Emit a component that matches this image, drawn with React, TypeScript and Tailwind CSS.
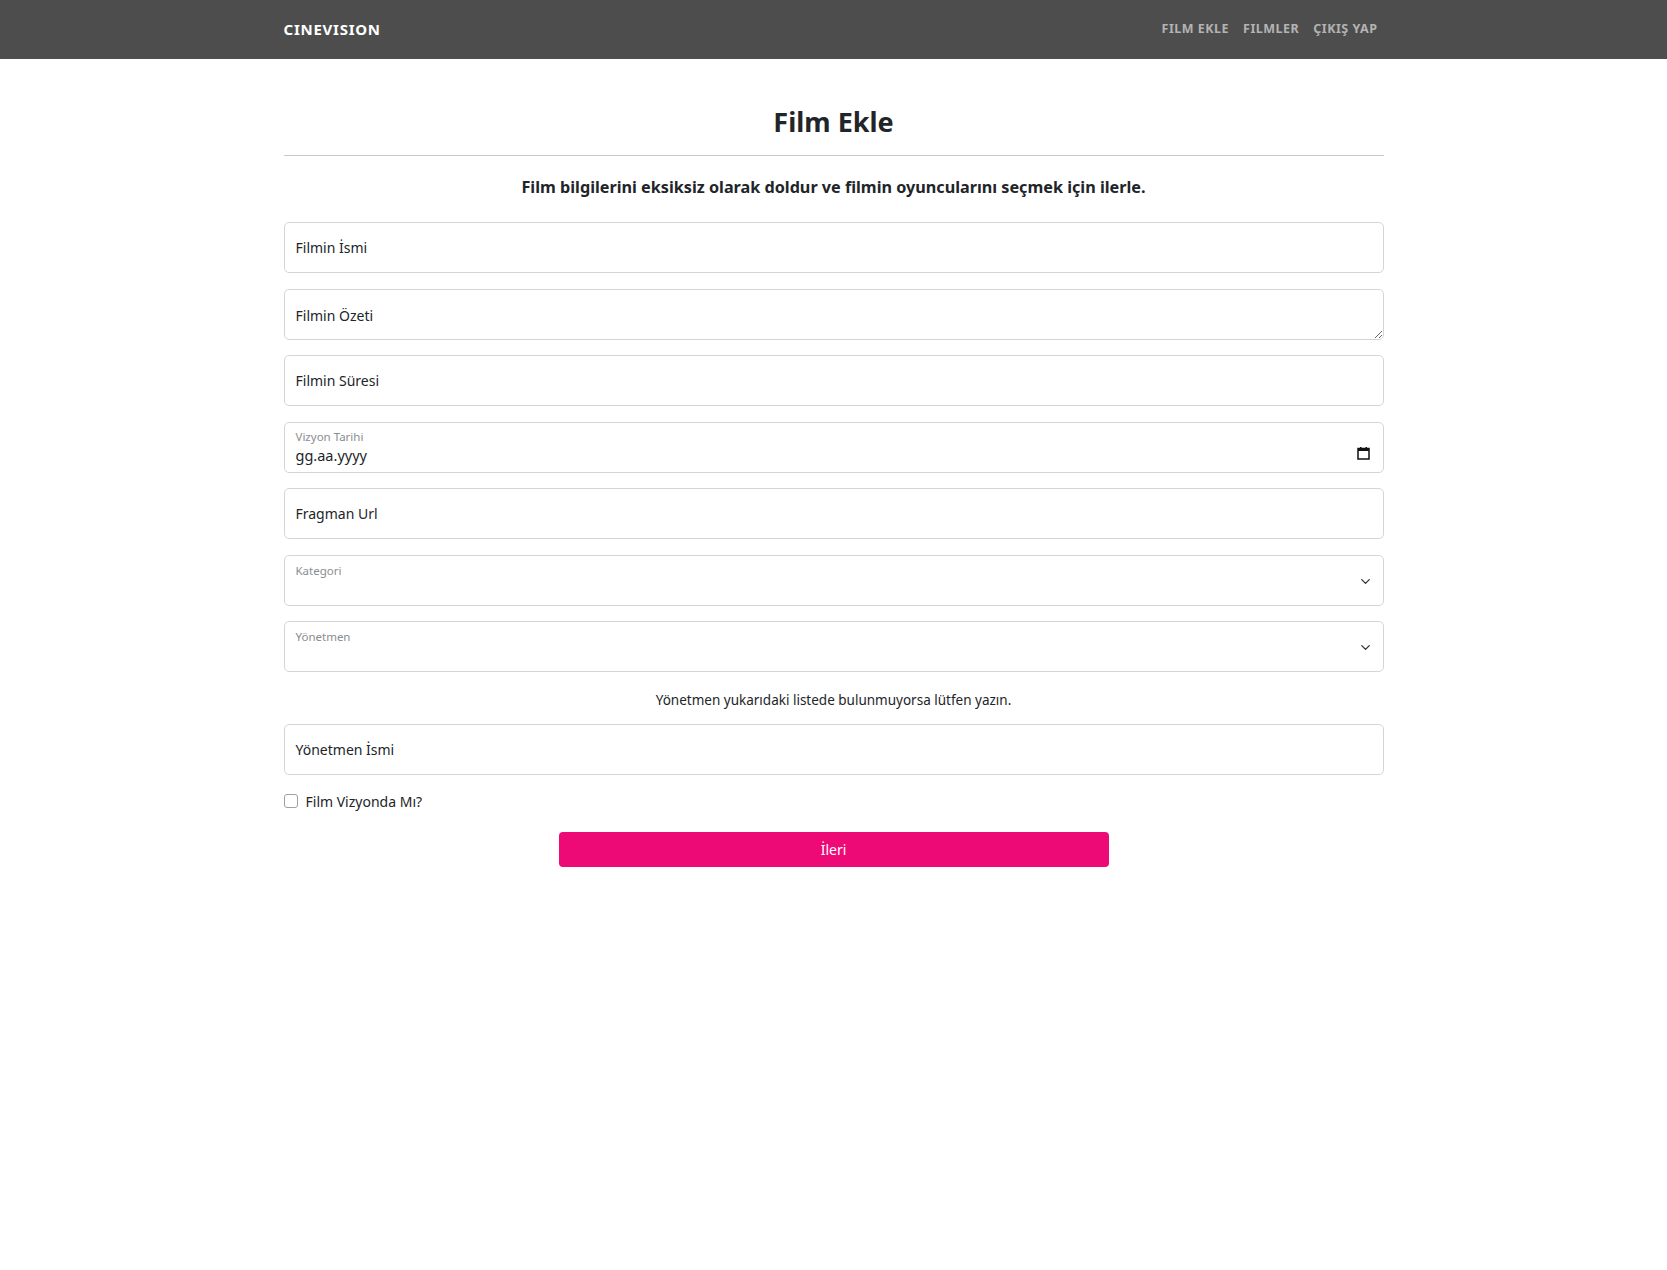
import { ChevronDown } from 'lucide-react';

const font = { fontFamily: '"Segoe UI", "Noto Sans", "Open Sans", sans-serif' };

function Navbar() {
    return (
        <nav className="bg-[#4d4d4d] h-[59px]">
            <div className="w-[1100px] mx-auto h-full flex items-center justify-between">
                <span className="text-white font-bold text-[15px] tracking-[0.05em]">CINEVISION</span>
                <div className="flex items-center gap-[14px] pr-[6px]">
                    <a className="text-[#b3b3b3] font-bold text-[12.5px] tracking-[0.04em]">FILM EKLE</a>
                    <a className="text-[#b3b3b3] font-bold text-[12.5px] tracking-[0.04em]">FILMLER</a>
                    <a className="text-[#b3b3b3] font-bold text-[12.5px] tracking-[0.04em]">ÇIKIŞ YAP</a>
                </div>
            </div>
        </nav>
    );
}

function TextField({ label }: { label: string }) {
    return (
        <div className="h-[51px] border border-[#d3d6d9] rounded-[5px] flex items-center px-[11px] text-[14px] text-[#212529]">
            {label}
        </div>
    );
}

function SelectField({ label }: { label: string }) {
    return (
        <div className="relative h-[51px] border border-[#d3d6d9] rounded-[5px] px-[11px] pt-[6px]">
            <div className="text-[11.5px] text-[#8a8d91]">{label}</div>
            <ChevronDown size={15} strokeWidth={2.2} className="absolute right-[10px] top-[18px] text-[#343a40]" />
        </div>
    );
}

export default function App() {
    return (
        <div className="min-h-[1270px] bg-white" style={font}>
            <Navbar />

            <main className="w-[1100px] mx-auto">
                <h1 className="text-center text-[27px] font-bold text-[#212529] mt-[39px] leading-[48px]">Film Ekle</h1>
                <hr className="mt-[9px] border-t border-[#c8c8c8]" />
                <h5 className="text-center text-[16.2px] font-bold text-[#212529] mt-[18px] leading-[26px]">
                    Film bilgilerini eksiksiz olarak doldur ve filmin oyuncularını seçmek için ilerle.
                </h5>

                <form className="mt-[22px] flex flex-col gap-[15.5px]">
                    <TextField label="Filmin İsmi" />
                    <textarea
                        defaultValue=""
                        placeholder="Filmin Özeti"
                        className="h-[51px] min-h-[51px] block border border-[#d3d6d9] rounded-[5px] px-[11px] pt-[15px] text-[14px] text-[#212529] placeholder:text-[#212529] outline-none resize-y"
                    />
                    <TextField label="Filmin Süresi" />

                    <div className="relative h-[51px] border border-[#d3d6d9] rounded-[5px] px-[11px] pt-[6px]">
                        <div className="text-[11.5px] text-[#8a8d91] leading-[16px]">Vizyon Tarihi</div>
                        <div className="text-[14.5px] text-[#212529] leading-[20px]">gg.aa.yyyy</div>
                        <svg width="13" height="13" viewBox="0 0 13 13" className="absolute right-[13px] top-[24px]">
                            <rect x="1" y="1.5" width="11" height="10.5" fill="none" stroke="#111" strokeWidth="1.5" />
                            <rect x="1" y="1" width="11" height="3" fill="#111" />
                            <rect x="3" y="0" width="1.5" height="2" fill="#111" />
                            <rect x="8.5" y="0" width="1.5" height="2" fill="#111" />
                        </svg>
                    </div>

                    <TextField label="Fragman Url" />
                    <SelectField label="Kategori" />
                    <SelectField label="Yönetmen" />

                    <p className="text-center text-[13.5px] text-[#212529] leading-[18px] mt-[3px]">
                        Yönetmen yukarıdaki listede bulunmuyorsa lütfen yazın.
                    </p>

                    <TextField label="Yönetmen İsmi" />

                    <label className="flex items-center gap-[8px] text-[14px] text-[#212529]">
                        <span className="w-[14px] h-[14px] border border-[#a0a0a0] rounded-[3px] bg-white" />
                        Film Vizyonda Mı?
                    </label>

                    <div className="flex justify-center mt-[5px]">
                        <button type="button" className="w-[550px] h-[35px] bg-[#ee0a76] rounded-[4px] text-white text-[14px]">
                            İleri
                        </button>
                    </div>
                </form>
            </main>
        </div>
    );
}
